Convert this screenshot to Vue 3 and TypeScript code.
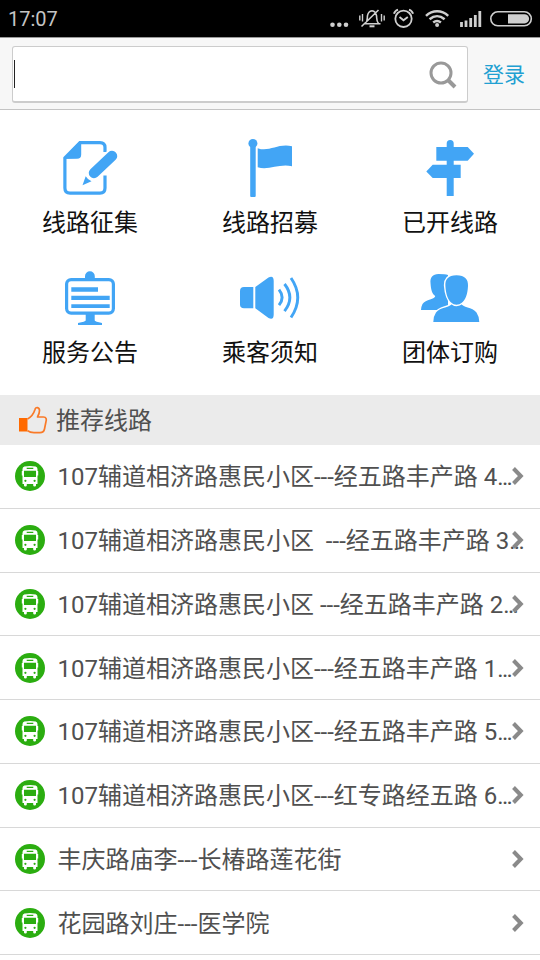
<script setup lang="ts">
import { ref } from 'vue'

interface MenuItem {
  icon: string
  label: string
}

interface Route {
  name: string
  clipped: boolean
}

const time = ref('17:07')

const menu: MenuItem[] = [
  { icon: 'collect', label: '线路征集' },
  { icon: 'flag', label: '线路招募' },
  { icon: 'sign', label: '已开线路' },
  { icon: 'board', label: '服务公告' },
  { icon: 'speaker', label: '乘客须知' },
  { icon: 'people', label: '团体订购' },
]

const routes: Route[] = [
  { name: '107辅道相济路惠民小区---经五路丰产路 4', clipped: true },
  { name: '107辅道相济路惠民小区  ---经五路丰产路 3', clipped: true },
  { name: '107辅道相济路惠民小区 ---经五路丰产路 2', clipped: true },
  { name: '107辅道相济路惠民小区---经五路丰产路 1', clipped: true },
  { name: '107辅道相济路惠民小区---经五路丰产路 5', clipped: true },
  { name: '107辅道相济路惠民小区---红专路经五路 6', clipped: true },
  { name: '丰庆路庙李---长椿路莲花街', clipped: false },
  { name: '花园路刘庄---医学院', clipped: false },
]
</script>

<template>
  <div class="screen">
    <div class="status">
      <span class="time">{{ time }}</span>
      <svg class="status-icons" viewBox="0 0 210 37" fill="none" stroke="#cfcfcf">
        <g fill="#cfcfcf" stroke="none">
          <circle cx="4.5" cy="24.7" r="2.3" />
          <circle cx="11.3" cy="24.7" r="2.3" />
          <circle cx="18" cy="24.7" r="2.3" />
        </g>
        <g stroke-width="1.6">
          <path d="M35.5 23.8h17M37.5 23.5c2.3-2.5 1.6-5.3 2-7.8.5-3.1 2-4.700 4.500-5 2.500.3 4 1.900 4.500 5 .4 2.500-.3 5.300 2 7.800M33.500 26.500 50.500 10" />
          <path d="M31.800 15.500v5M34.500 14v7.500M53.500 14v7.500M56.200 15.500v5" stroke-width="1.400" />
          <path d="M41.500 26.300h5" stroke-width="2" />
        </g>
        <circle cx="75.500" cy="18.800" r="8.200" stroke-width="1.800" />
        <path d="m71.500 17 4 3.300 4.300-3.300" stroke-width="1.800" />
        <path d="M66 13.800c.5-2 2-3.500 4-4.200M85 13.800c-.5-2-2-3.500-4-4.200" stroke-width="2" />
        <path d="M98 15.800c6.500-6 15.700-6 22.200 0M101.600 19.300c4.600-4 10.400-4 15 0M105.200 22.500c2.500-2 5.200-2 7.700 0" stroke-width="2.500" />
        <circle cx="109.100" cy="25" r="2" fill="#cfcfcf" stroke="none" />
        <path d="M133.500 27v-5M138 27v-6.500M142.700 27v-9M147.300 27V15M151.800 27V11" stroke-width="2.800" />
        <rect x="162.800" y="11.800" width="40.500" height="14" rx="7" stroke-width="1.600" />
        <path d="M180 14.200h16.500a4.600 4.600 0 0 1 0 9.200H180z" fill="#cfcfcf" stroke="none" />
      </svg>
    </div>

    <header class="topbar">
      <div class="search">
        <i class="caret"></i>
        <svg class="magnifier" viewBox="0 0 30 30" fill="none" stroke="#999">
          <circle cx="13" cy="13" r="10" stroke-width="3" />
          <path d="m20 20 7 7" stroke-width="4" />
        </svg>
      </div>
      <a class="login">登录</a>
    </header>

    <nav class="menu">
      <div v-for="item in menu" :key="item.icon" class="menu-item">
        <svg class="menu-icon" viewBox="0 0 60 60" fill="#42a5f5">
          <template v-if="item.icon === 'collect'">
            <path d="M45 14V9.500Q45 4.600 40 4.600H20L4.900 20V50Q4.900 55.200 10 55.200H40Q45 55.200 45 50V37.500" fill="none" stroke="#42a5f5" stroke-width="3.200" />
            <path d="M3.500 21 19.500 3.200H21.200V16.500Q21.200 20.800 17 20.800Z" />
            <path d="M52 18 34.500 34.500" stroke="#fff" stroke-width="13.500" stroke-linecap="round" />
            <path d="M52 18 34 35" stroke="#42a5f5" stroke-width="10.500" stroke-linecap="round" />
            <path d="M22.500 47.200 25.700 38.200Q28 42 31.500 43.200Z" />
          </template>
          <template v-else-if="item.icon === 'flag'">
            <circle cx="12.900" cy="5.400" r="4.500" />
            <rect x="10.200" y="7" width="5.500" height="52" rx="1" />
            <path d="M17.700 10.200C29 14.500 38 5 52 8.300V28.300C39 25.500 29 32.500 17.700 29.300Z" />
          </template>
          <template v-else-if="item.icon === 'sign'">
            <path d="M26.700 58V5.500a3.500 3.500 0 0 1 7 0V58Z" />
            <path d="M16.300 9H47.700L54 15.800 47.700 22.700H16.300Z" />
            <path d="M40.700 26.700H12.700L6.300 33.400 12.700 40H40.700Z" />
          </template>
          <template v-else-if="item.icon === 'board'">
            <rect x="6.600" y="11.600" width="46.800" height="33.500" rx="4.500" fill="none" stroke="#42a5f5" stroke-width="3.200" />
            <path d="M25 11V8.200a4.900 4.900 0 0 1 9.800 0V11ZM11.300 19.300H38V23.700H11.300ZM11.300 27.800H49.700V32H11.300ZM11.300 36.300H49.700V40H11.300ZM25.700 46H34.700V52.500Q35 53.700 42 55V57H18V55Q25.500 53.700 25.700 52.500Z" />
          </template>
          <template v-else-if="item.icon === 'speaker'">
            <path d="M13.300 19H4Q0 19 0 23V36.500Q0 40.300 4 40.300H13.300ZM15.300 19 28.500 9.500Q33.700 7 33.700 13V46.500Q33.700 52.500 28.500 50L15.300 40.300Z" />
            <path d="M39 21.700Q45.200 29.500 39 37.200M44.500 16Q55.200 29.500 44.500 43.200M51 10Q64.500 29.500 51 49.500" fill="none" stroke="#42a5f5" stroke-width="2.900" />
          </template>
          <template v-else>
            <path d="M18.500 6C12.500 6 10 9.500 10.500 15C11 22 12 25.500 15.200 28C15.500 31 5.500 31.500 2.500 36Q1 39 1 42H28V7Q25 6 18.500 6Z" />
            <path d="M36.500 7.300C28 7.300 25 11.500 25.400 18C26 27 28 32 32 35.500C31 39.500 20 39 16 44.500Q13.500 48 13.300 54H59.300Q59 48 56.500 44.500C52.500 39 42 39.500 41.200 35.500C45.500 32 47.500 27 48 18C48.400 11.500 45 7.300 36.500 7.300Z" stroke="#fff" stroke-width="3" paint-order="stroke" />
            <path d="M30.500 35Q36.500 40 42.700 35" fill="none" stroke="#fff" stroke-width="1.300" />
          </template>
        </svg>
        <span class="menu-label">{{ item.label }}</span>
      </div>
    </nav>

    <div class="section">
      <svg class="thumb" viewBox="0 0 30 30">
        <path d="M1 13H9.500V26.500H1Z" fill="#ff6a00" />
        <path d="M9.500 14Q15 11 17 4.500C17.500 1.500 21.500 2 21.500 5.500Q21.500 8.500 19.500 12H25.500C28.300 12 28.800 14.500 27.900 17L26.500 24C26 26.500 24.500 27.700 22 27.700H16Q12 27.700 9.500 25.700" fill="none" stroke="#f97a28" stroke-width="1.700" stroke-linejoin="round" />
      </svg>
      <span class="section-title">推荐线路</span>
    </div>

    <ul class="routes">
      <li v-for="route in routes" :key="route.name" class="route">
        <svg class="bus" viewBox="0 0 30 30">
          <circle cx="15" cy="15" r="15" fill="#2bad10" />
          <path d="M9.300 5.500Q15 4.300 20.700 5.500Q22.500 6 22.500 8V10h.7v4.500h-.7V23H21v1.500q0 1-1.400 1t-1.400-1V23h-6.400v1.500q0 1-1.400 1t-1.400-1V23H7.500V14.500h-.7V10h.7V8Q7.500 6 9.300 5.500Z" fill="#fff" />
          <path d="M11.700 6.700h6.600v1.200h-6.600ZM9 9.800H21V16H9Z" fill="#2bad10" />
          <circle cx="10.400" cy="19.800" r="1.100" fill="#2bad10" />
          <circle cx="19.600" cy="19.800" r="1.100" fill="#2bad10" />
        </svg>
        <span class="route-name">{{ route.name }}<span v-if="route.clipped" class="dots">...</span></span>
        <svg class="chevron" viewBox="0 0 14 20">
          <path d="m2.500 2.500 7.300 7.500-7.300 7.500" fill="none" stroke="#8a8a8a" stroke-width="4" />
        </svg>
      </li>
    </ul>
  </div>
</template>

<style>
body {
  background: #fff;
}
</style>

<style scoped>
.screen {
  width: 540px;
  height: 960px;
  overflow: hidden;
  background: #fff;
  font-family: Roboto, "Noto Sans CJK SC", sans-serif;
  color: #505050;
}
.status {
  height: 37px;
  background: #000;
  display: flex;
  align-items: center;
  justify-content: space-between;
  padding: 0 2px 0 8px;
}
.time {
  font-size: 20px;
  line-height: 37px;
  padding-top: 2px;
  color: #c4c4c4;
}
.status-icons {
  width: 210px;
  height: 37px;
}
.topbar {
  box-sizing: border-box;
  height: 73px;
  padding: 8px 0 0 12px;
  display: flex;
  background: #f7f7f7;
  border-top: 1px solid #999;
  border-bottom: 1px solid #c4c4c4;
}
.search {
  box-sizing: border-box;
  width: 456px;
  height: 57px;
  border: 1px solid #ccc;
  border-bottom-width: 2px;
  border-radius: 3px;
  background: #fff;
  display: flex;
  align-items: center;
  justify-content: space-between;
  padding: 0 9px 0 1px;
}
.caret {
  width: 1px;
  height: 28px;
  background: #222;
}
.magnifier {
  width: 30px;
  height: 30px;
  padding-top: 1px;
}
.login {
  margin-left: 15px;
  font-size: 21px;
  line-height: 58px;
  color: #21a0d2;
}
.menu {
  box-sizing: border-box;
  height: 284.5px;
  padding-top: 28px;
  display: grid;
  grid-template-columns: repeat(3, 180px);
  grid-auto-rows: 130px;
}
.menu-item {
  display: flex;
  flex-direction: column;
  align-items: center;
}
.menu-icon {
  width: 60px;
  height: 60px;
}
.menu-label {
  margin-top: 7px;
  font-size: 24px;
  line-height: 36px;
  color: #111;
}
.section {
  height: 50.5px;
  background: #ebebeb;
  display: flex;
  align-items: center;
  gap: 8px;
  padding-left: 18px;
  font-size: 24px;
}
.section-title {
  padding-bottom: 2px;
}
.thumb {
  width: 30px;
  height: 30px;
}
.routes {
  margin: 0;
  padding: 0;
  list-style: none;
}
.route {
  box-sizing: border-box;
  height: 63.75px;
  border-bottom: 1px solid #d8d8d8;
  display: flex;
  align-items: center;
  padding: 0 15px;
  font-size: 24px;
}
.bus {
  width: 30px;
  height: 30px;
  flex: none;
}
.route-name {
  flex: 1;
  min-width: 0;
  margin-left: 12.5px;
  padding-bottom: 3px;
  white-space: pre;
}
.dots {
  letter-spacing: -1.7px;
}
.chevron {
  width: 14px;
  height: 20px;
  flex: none;
}
</style>
